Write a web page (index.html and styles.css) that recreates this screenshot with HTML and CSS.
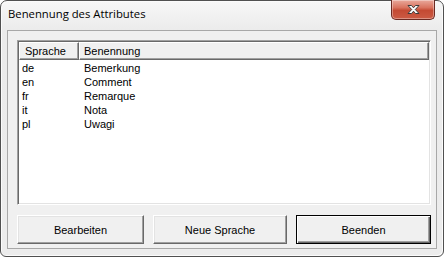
FILE: index.html
```html
<!DOCTYPE html>
<html>
<head>
<meta charset="utf-8">
<link rel="stylesheet" href="styles.css">
</head>
<body>
<div class="window">
  <div class="titlebar">
    <span class="title">Benennung des Attributes</span>
    <div class="close">
      <svg width="17" height="11" viewBox="0 0 17 11">
        <path d="M3 1.5 L6.5 1.5 L8.5 3.8 L10.5 1.5 L14 1.5 L10.3 5.5 L14 9.5 L10.5 9.5 L8.5 7.2 L6.5 9.5 L3 9.5 L6.7 5.5 Z" fill="#fff" stroke="#3b3b3b" stroke-width="1" stroke-linejoin="round"/>
      </svg>
    </div>
  </div>
  <div class="client">
    <div class="listview">
      <div class="header">
        <div class="hcell c1">Sprache</div>
        <div class="hcell c2">Benennung</div>
      </div>
      <div class="rows">
        <div class="row"><span class="c1">de</span><span class="c2">Bemerkung</span></div>
        <div class="row"><span class="c1">en</span><span class="c2">Comment</span></div>
        <div class="row"><span class="c1">fr</span><span class="c2">Remarque</span></div>
        <div class="row"><span class="c1">it</span><span class="c2">Nota</span></div>
        <div class="row"><span class="c1">pl</span><span class="c2">Uwagi</span></div>
      </div>
    </div>
    <div class="buttons">
      <div class="btn b1">Bearbeiten</div>
      <div class="btn b2">Neue Sprache</div>
      <div class="btn b3 default">Beenden</div>
    </div>
  </div>
</div>
</body>
</html>
```
FILE: styles.css
```css
* { box-sizing: border-box; }
html, body { margin: 0; padding: 0; background: #ffffff; }
body { width: 444px; height: 257px; overflow: hidden; }

.window {
  width: 444px;
  height: 257px;
  border: 1px solid #505050;
  border-radius: 7px 7px 6px 6px;
  background: linear-gradient(to bottom, #f7f7f7 0px, #ebebeb 30px, #ececec 100%);
  box-shadow: inset 1px 1px 0 #fbfbfb, inset -1px -1px 0 #fbfbfb;
  display: flex;
  flex-direction: column;
}

.titlebar {
  height: 29px;
  display: flex;
  justify-content: space-between;
  align-items: flex-start;
  padding: 0 8px 0 7px;
}
.title {
  font-family: "Open Sans", "Noto Sans", sans-serif;
  font-size: 11.3px;
  color: #000;
  line-height: 14px;
  margin-top: 6px;
}
.close {
  width: 44px;
  height: 20px;
  margin-top: -1px;
  border: 1px solid #6b2a22;
  border-top: none;
  border-radius: 0 0 5px 5px;
  background: linear-gradient(to bottom, #e9a99c 0%, #d9735f 40%, #c44a33 55%, #cc5b44 100%);
  box-shadow: inset 0 0 0 1px rgba(255,255,255,0.35);
  display: flex;
  align-items: center;
  justify-content: center;
}

.client {
  margin: 0 6px;
  height: 219px;
  border: 1px solid #a8a8a8;
  background: #f0f0f0;
  padding: 9px 5px 0 9px;
  display: flex;
  flex-direction: column;
}

.listview {
  height: 165px;
  background: #fff;
  border-top: 1px solid #a0a0a0;
  border-left: 1px solid #a0a0a0;
  border-right: 1px solid #fff;
  border-bottom: 1px solid #fff;
  box-shadow: inset 1px 1px 0 #696969, inset -1px -1px 0 #e3e3e3;
  padding: 1px;
  font-family: "Liberation Sans", Arial, sans-serif;
  font-size: 11px;
  color: #000;
}

.header {
  display: flex;
  height: 18px;
}
.hcell {
  height: 18px;
  line-height: 16px;
  background: #f0f0f0;
  border-top: 1px solid #fff;
  border-left: 1px solid #fff;
  border-right: 1px solid #696969;
  border-bottom: 1px solid #696969;
  box-shadow: inset -1px -1px 0 #a0a0a0;
}
.hcell.c1 { width: 60px; padding-left: 5px; }
.hcell.c2 { flex: 1; padding-left: 4px; }

.rows { padding-top: 1px; }
.row {
  display: flex;
  height: 14px;
  line-height: 14px;
}
.row .c1 { width: 65px; padding-left: 3px; }
.row .c2 { flex: 1; }

.buttons {
  display: flex;
  margin-top: 10px;
  gap: 9px;
}
.btn {
  height: 29px;
  background: #f0f0f0;
  border-top: 1px solid #fff;
  border-left: 1px solid #fff;
  border-right: 1px solid #696969;
  border-bottom: 1px solid #696969;
  box-shadow: inset -1px -1px 0 #a0a0a0, inset 1px 1px 0 #e3e3e3;
  font-family: "Liberation Sans", Arial, sans-serif;
  font-size: 11px;
  color: #000;
  display: flex;
  align-items: center;
  justify-content: center;
}
.b1 { width: 127px; }
.b2 { width: 134px; }
.b3 { width: 135px; }
.btn.default {
  border: 1px solid #000;
  box-shadow: inset 1px 1px 0 #fff, inset -1px -1px 0 #696969, inset -2px -2px 0 #a0a0a0;
}
```
